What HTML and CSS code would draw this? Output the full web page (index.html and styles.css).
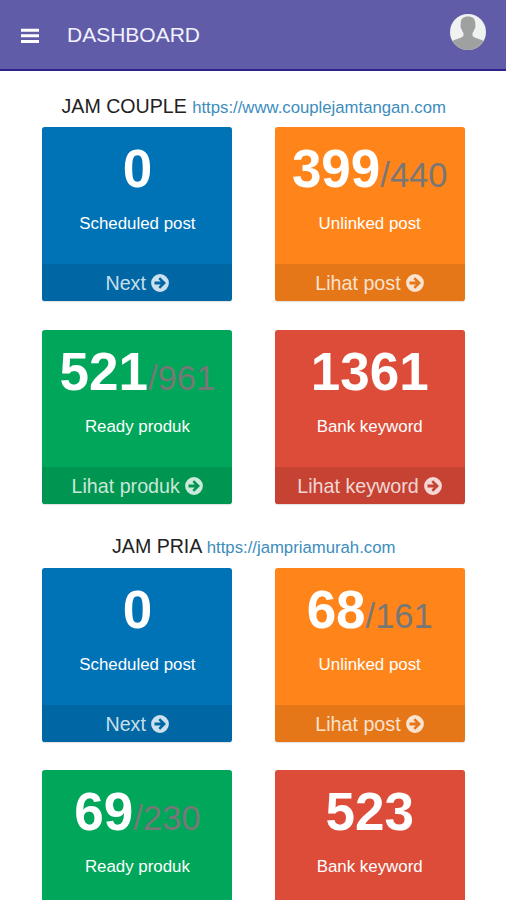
FILE: index.html
```html
<!DOCTYPE html>
<html lang="id">
<head>
<meta charset="utf-8">
<title>Dashboard</title>
<link rel="stylesheet" href="styles.css">
</head>
<body>
<svg class="defs" width="0" height="0" aria-hidden="true">
  <symbol id="arrow" viewBox="0 0 18 18">
    <path fill="currentColor" fill-rule="evenodd" d="M9 .1a8.900 8.900 0 1 0 0 17.800a8.900 8.900 0 0 0 0-17.800ZM9.200 3.300 15 9l-5.800 5.700-1.800-1.800 2.400-2.500H3.500V7.600h6.300L7.400 5.100Z"/>
  </symbol>
</svg>
<header class="topbar">
  <svg class="menu" viewBox="0 0 18 16"><path fill="currentColor" d="M0 .7h18v3H0zM0 6.300h18v3H0zM0 11.900h18v3H0z"/></svg>
  <h1 class="title">DASHBOARD</h1>
  <svg class="avatar" viewBox="0 0 36 36">
    <clipPath id="round"><circle cx="18" cy="18" r="18"/></clipPath>
    <g clip-path="url(#round)">
      <path fill="#f0f1f1" d="M0 0h36v36H0z"/>
      <path fill="#9fa1a1" d="M18 2.500c4.800 0 7.300 2.500 7.300 7.200 0 1 .3 1.800.1 3.200-.2 1.300-.8 1.600-1.100 2.700-.3 1.400-1 2.600-1.800 3.500v2.400c.3 1.700 2.700 2 5.500 3.200 3 1.100 5.500 1.900 8 3.800V36H0v-7.500c2.500-1.900 5-2.700 8-3.800 2.800-1.200 5.200-1.500 5.500-3.200v-2.400c-.8-.9-1.500-2.100-1.800-3.500-.3-1.100-.9-1.400-1.100-2.700-.2-1.400.1-2.200.1-3.200 0-4.700 2.500-7.200 7.300-7.200z"/>
    </g>
  </svg>
</header>
<main class="content">
  <section class="site">
    <h2 class="site-name">JAM COUPLE <a class="site-link">https://www.couplejamtangan.com</a></h2>
    <div class="cards">
      <article class="card blue">
        <div class="inner"><h3 class="count">0</h3><p class="label">Scheduled post</p></div>
        <a class="more">Next <svg class="arrow"><use href="#arrow"/></svg></a>
      </article>
      <article class="card orange">
        <div class="inner"><h3 class="count">399<small class="total">/440</small></h3><p class="label">Unlinked post</p></div>
        <a class="more">Lihat post <svg class="arrow"><use href="#arrow"/></svg></a>
      </article>
      <article class="card green">
        <div class="inner"><h3 class="count">521<small class="total">/961</small></h3><p class="label">Ready produk</p></div>
        <a class="more">Lihat produk <svg class="arrow"><use href="#arrow"/></svg></a>
      </article>
      <article class="card red">
        <div class="inner"><h3 class="count">1361</h3><p class="label">Bank keyword</p></div>
        <a class="more">Lihat keyword <svg class="arrow"><use href="#arrow"/></svg></a>
      </article>
    </div>
  </section>
  <section class="site">
    <h2 class="site-name">JAM PRIA <a class="site-link">https://jampriamurah.com</a></h2>
    <div class="cards">
      <article class="card blue">
        <div class="inner"><h3 class="count">0</h3><p class="label">Scheduled post</p></div>
        <a class="more">Next <svg class="arrow"><use href="#arrow"/></svg></a>
      </article>
      <article class="card orange">
        <div class="inner"><h3 class="count">68<small class="total">/161</small></h3><p class="label">Unlinked post</p></div>
        <a class="more">Lihat post <svg class="arrow"><use href="#arrow"/></svg></a>
      </article>
      <article class="card green cut">
        <div class="inner"><h3 class="count">69<small class="total">/230</small></h3><p class="label">Ready produk</p></div>
      </article>
      <article class="card red cut">
        <div class="inner"><h3 class="count">523</h3><p class="label">Bank keyword</p></div>
      </article>
    </div>
  </section>
</main>
</body>
</html>
```
FILE: styles.css
```css
* { box-sizing: border-box; }
body {
  height: 900px;
  overflow: hidden;
  margin: 0;
  background: #fff;
  color: #222;
  font-family: "Liberation Sans", Arial, sans-serif;
}
h1, h2, h3, p { margin: 0; font-weight: 400; }
.defs { display: block; height: 0; }

.topbar {
  display: flex;
  align-items: center;
  height: 71px;
  padding: 0 20px 0 21px;
  background: #605ca8;
  border-bottom: 2px solid #30228d;
  color: #fff;
}
.menu { width: 18px; height: 16px; margin-top: 2px; }
.title { margin-left: 28px; font-size: 21px; line-height: 24px; color: #f1f1ff; }
.avatar { width: 36px; height: 36px; margin: 0 0 5px auto; }

.content { height: 829px; overflow: hidden; padding: 21.500px 41px 0 42.400px; }
.site { height: 440.500px; }
.site-name {
  height: 34.500px;
  line-height: 26px;
  font-size: 19.600px;
  text-align: center;
  white-space: nowrap;
}
.site-link { font-size: 16.730px; color: #3c8dbc; }
.cards {
  display: grid;
  grid-template-columns: 190px 190px;
  grid-auto-rows: 174px;
  column-gap: 42.300px;
  row-gap: 28.500px;
}
.card {
  display: flex;
  flex-direction: column;
  overflow: hidden;
  border-radius: 2.800px;
  box-shadow: 0 1px 1px rgba(0, 0, 0, .12);
  color: #fff;
  text-align: center;
}
.blue { background: #0073b7; }
.orange { background: #ff851b; }
.green { background: #00a65a; }
.red { background: #dd4b39; }
.inner { flex: 1; padding-top: 12px; }
.count { height: 59px; font-size: 53px; line-height: 59px; font-weight: 700; white-space: nowrap; }
.total { font-size: 34.500px; font-weight: 400; color: #777; }
.label { margin-top: 14px; font-size: 16.870px; line-height: 24px; }
.more {
  height: 37px;
  background: rgba(0, 0, 0, .1);
  color: rgba(255, 255, 255, .8);
  font-size: 19.680px;
  line-height: 38px;
}
.arrow { width: 18px; height: 18px; vertical-align: -2px; }
```
